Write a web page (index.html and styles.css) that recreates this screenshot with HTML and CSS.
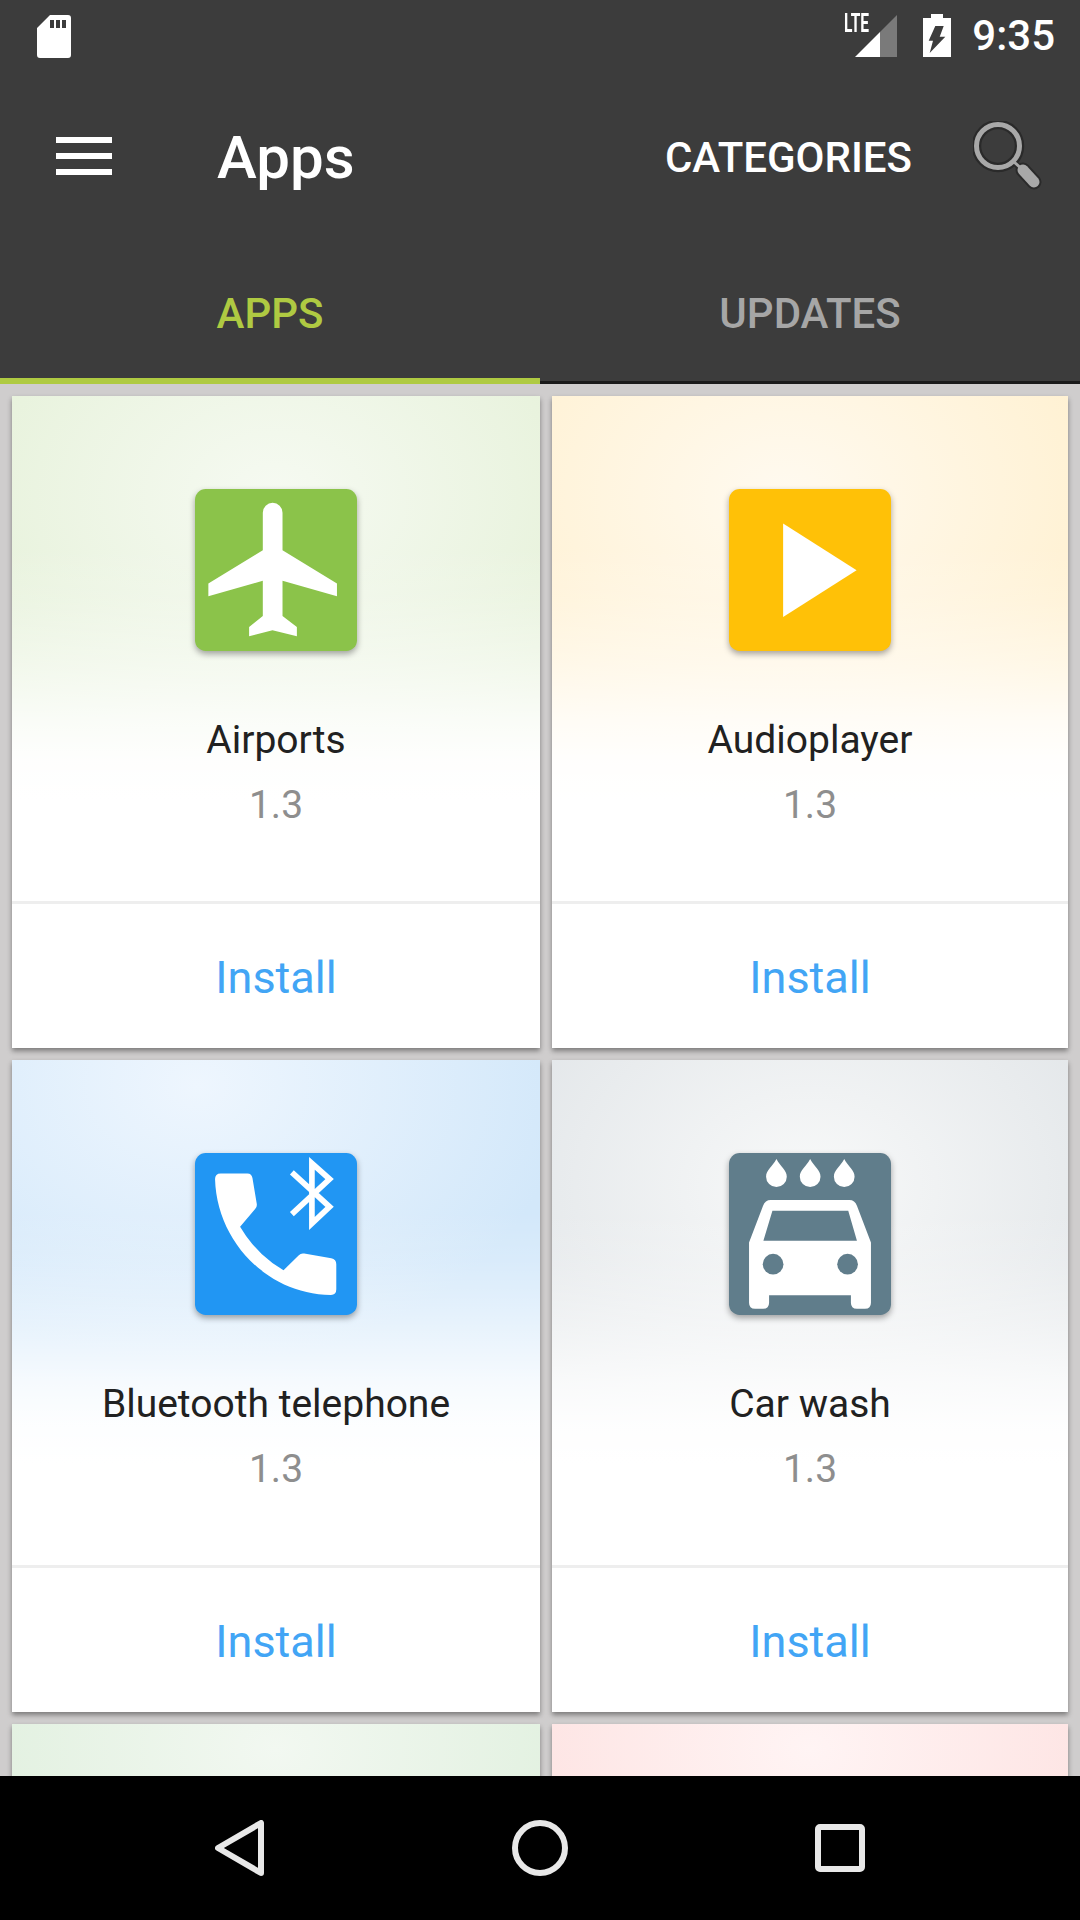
FILE: index.html
```html
<!DOCTYPE html>
<html>
<head>
    <meta charset="UTF-8">
    <title>Apps</title>
    <link rel="stylesheet" href="styles.css">
</head>
<body>
    <header class="app-header">
        <div class="status-bar">
            <svg class="sd-icon" viewBox="0 0 34 43">
                <path fill="#fff" fill-rule="evenodd" d="M13 0H31a3 3 0 0 1 3 3V40a3 3 0 0 1-3 3H3a3 3 0 0 1-3-3V13ZM13 5V13H17V5ZM19 5V13H23V5ZM25 5V13H29V5Z"/>
            </svg>
            <div class="status-right">
                <span class="lte">LTE</span>
                <svg class="signal-icon" viewBox="0 0 42 42">
                    <path fill="#7a7a7a" d="M42 0V42H25V17Z"/>
                    <path fill="#fff" d="M25 17V42H0Z"/>
                </svg>
                <svg class="battery-icon" viewBox="0 0 28 43">
                    <path fill="#fff" d="M8 0H20V4H28V43H0V4H8Z"/>
                    <path fill="#3c3c3c" d="M12.300 12H20.700L16.700 22.700H22.300L6.700 39 10 26.700H5.700Z"/>
                </svg>
                <span class="clock">9:35</span>
            </div>
        </div>
        <div class="toolbar">
            <div class="menu-icon"><span></span><span></span><span></span></div>
            <h1 class="page-title">Apps</h1>
            <span class="toolbar-action">CATEGORIES</span>
            <svg class="search-icon" viewBox="0 0 70 70">
                <circle cx="25" cy="25" r="21.500" fill="none" stroke="#2a2a2a" stroke-width="9.500"/>
                <path d="M41 41 61 61" stroke="#2a2a2a" stroke-width="6" fill="none"/>
                <path d="M50 49 61 61" stroke="#2a2a2a" stroke-width="15" stroke-linecap="round" fill="none"/>
                <circle cx="25" cy="25" r="21.500" fill="none" stroke="#a8a8a8" stroke-width="5"/>
                <path d="M41 41 50 49" stroke="#a8a8a8" stroke-width="3" fill="none"/>
                <path d="M50 49 61 61" stroke="#a8a8a8" stroke-width="11" stroke-linecap="round" fill="none"/>
            </svg>
        </div>
        <nav class="tabs">
            <div class="tab active">APPS</div>
            <div class="tab">UPDATES</div>
        </nav>
    </header>

    <main class="app-grid">
        <div class="card">
            <div class="card-top glow-green">
                <svg class="app-icon" viewBox="75 57 485 485">
                    <rect x="75" y="57" width="485" height="485" rx="32" fill="#8bc34a"/>
                    <path fill="#fff" d="M278 128a29.500 29.500 0 0 1 59 0V240L500 340V378L337 332V437L380 470V498L307 480 237 498V470L278 437V332L115 378V340L278 240Z"/>
                </svg>
                <div class="app-name">Airports</div>
                <div class="app-version">1.3</div>
            </div>
            <div class="card-action">Install</div>
        </div>
        <div class="card">
            <div class="card-top glow-amber">
                <svg class="app-icon" viewBox="75 57 485 485">
                    <rect x="75" y="57" width="485" height="485" rx="32" fill="#ffc107"/>
                    <path fill="#fff" d="M237 160 457 300 237 440Z"/>
                </svg>
                <div class="app-name">Audioplayer</div>
                <div class="app-version">1.3</div>
            </div>
            <div class="card-action">Install</div>
        </div>
        <div class="card">
            <div class="card-top glow-blue">
                <svg class="app-icon" viewBox="75 57 485 485">
                    <rect x="75" y="57" width="485" height="485" rx="32" fill="#2196f3"/>
                    <path fill="#fff" d="M152 118H232Q245 118 247 132L260 210Q261 219 255 225L210 278Q260 362 340 408L385 364Q392 356 402 358L483 372Q498 375 498 390V465Q498 482 482 482C290 480 140 320 135 135Q135 118 152 118Z"/>
                    <path fill="none" stroke="#fff" stroke-width="17" d="M365 115 478 218 425 268V88L478 135 365 240"/>
                </svg>
                <div class="app-name">Bluetooth telephone</div>
                <div class="app-version">1.3</div>
            </div>
            <div class="card-action">Install</div>
        </div>
        <div class="card">
            <div class="card-top glow-grey">
                <svg class="app-icon" viewBox="75 57 485 485">
                    <rect x="75" y="57" width="485" height="485" rx="32" fill="#607d8b"/>
                    <path fill="#fff" d="M217 75C205 98 186 108 186 128a31 31 0 0 0 62 0C248 108 229 98 217 75ZM318 75C306 98 287 108 287 128a31 31 0 0 0 62 0C349 108 330 98 318 75ZM420 75C408 98 389 108 389 128a31 31 0 0 0 62 0C451 108 432 98 420 75Z"/>
                    <path fill="#fff" fill-rule="evenodd" d="M200 198H435Q452 198 458 215L500 325V505Q500 523 482 523H458Q440 523 440 505V483H195V505Q195 523 177 523H153Q135 523 135 505V325L177 215Q183 198 200 198ZM205 230 178 320H458L432 230Z"/>
                    <circle cx="207" cy="390" r="31" fill="#607d8b"/>
                    <circle cx="430" cy="390" r="31" fill="#607d8b"/>
                </svg>
                <div class="app-name">Car wash</div>
                <div class="app-version">1.3</div>
            </div>
            <div class="card-action">Install</div>
        </div>
        <div class="card">
            <div class="card-top glow-mint"></div>
        </div>
        <div class="card">
            <div class="card-top glow-pink"></div>
        </div>
    </main>

    <footer class="nav-bar">
        <svg class="nav-back" viewBox="0 0 50 56">
            <path fill="none" stroke="#e8e8e8" stroke-width="6" stroke-linejoin="round" d="M46 3V53L3 28Z"/>
        </svg>
        <svg class="nav-home" viewBox="0 0 56 56">
            <circle cx="28" cy="28" r="25" fill="none" stroke="#e8e8e8" stroke-width="6"/>
        </svg>
        <svg class="nav-recent" viewBox="0 0 50 48">
            <rect x="3" y="3" width="44" height="42" rx="2" fill="none" stroke="#e8e8e8" stroke-width="6"/>
        </svg>
    </footer>
</body>
</html>
```
FILE: styles.css
```css
* {
    box-sizing: border-box;
}

body {
    margin: 0;
    width: 1080px;
    height: 1920px;
    overflow: hidden;
    display: flex;
    flex-direction: column;
    background-color: #cfcdcd;
    font-family: Roboto, "Noto Sans", sans-serif;
}

.app-header {
    flex: none;
    background-color: #3c3c3c;
    color: white;
}

.status-bar {
    height: 72px;
    display: flex;
    align-items: flex-start;
    justify-content: space-between;
    padding: 15px 25px 0 37px;
}

.sd-icon {
    width: 34px;
    height: 43px;
}

.status-right {
    display: flex;
    align-items: flex-start;
}

.lte {
    width: 27px;
    margin-right: -16px;
    font-size: 25px;
    line-height: 18px;
    font-weight: 700;
    transform: scaleX(0.62);
    transform-origin: left top;
}

.signal-icon {
    width: 42px;
    height: 42px;
}

.battery-icon {
    width: 28px;
    height: 43px;
    margin: -1px 21px 0 26px;
}

.clock {
    font-size: 42px;
    line-height: 42px;
    font-weight: 500;
}

.toolbar {
    height: 168px;
    display: flex;
    align-items: center;
    padding: 0 37px 0 56px;
}

.menu-icon {
    width: 56px;
    display: flex;
    flex-direction: column;
    gap: 10px;
    margin-right: 105px;
}

.menu-icon span {
    height: 6px;
    background-color: white;
}

.page-title {
    flex: 1;
    margin: 4px 0 0;
    font-size: 60px;
    font-weight: 500;
    line-height: 64px;
}

.toolbar-action {
    margin-top: 2px;
    font-size: 42px;
    font-weight: 500;
}

.search-icon {
    width: 70px;
    height: 70px;
    margin-left: 61px;
}

.tabs {
    height: 144px;
    display: flex;
}

.tab {
    flex: 1;
    display: flex;
    align-items: center;
    justify-content: center;
    font-size: 42px;
    font-weight: 500;
    color: #a6a6a6;
    padding-top: 3px;
    box-shadow: inset 0 -3px 0 #1a1a1a;
}

.tab.active {
    color: #afca42;
    box-shadow: inset 0 -6px 0 #afca42;
}

.app-grid {
    flex: 1;
    min-height: 0;
    overflow: hidden;
    display: grid;
    grid-template-columns: 528px 516px;
    grid-auto-rows: 652px;
    gap: 12px;
    padding: 12px;
}

.card {
    display: flex;
    flex-direction: column;
    background-color: white;
    box-shadow: 0 3px 5px rgba(0, 0, 0, 0.4);
}

.card-top {
    height: 505px;
    flex: none;
    display: flex;
    flex-direction: column;
    align-items: center;
    padding-top: 93px;
}

/* fade to white is the same on every card, only the tint changes */
.glow-green,
.glow-amber,
.glow-blue,
.glow-grey {
    --fade: linear-gradient(to bottom, rgba(255, 255, 255, 0) 30%, rgba(255, 255, 255, 0.15) 40%, rgba(255, 255, 255, 0.45) 52%, rgba(255, 255, 255, 0.8) 64%, rgba(255, 255, 255, 0.95) 72%, #fff 80%);
}

.glow-green {
    background: var(--fade), radial-gradient(ellipse 70% 55% at 50% 20%, #f6faf2, #e5f1d8);
}

.glow-amber {
    background: var(--fade), radial-gradient(ellipse 70% 55% at 45% 20%, #fffaf0, #fff0cf);
}

.glow-blue {
    background: var(--fade), radial-gradient(ellipse 70% 55% at 35% 5%, #eef6fe, #d3e8fa);
}

.glow-grey {
    background: var(--fade), radial-gradient(ellipse 70% 55% at 50% 25%, #f8f9f9, #e1e5e8);
}

.glow-mint {
    background: radial-gradient(ellipse 70% 55% at 50% 5%, #f2f8f1, #deefdc);
}

.glow-pink {
    background: radial-gradient(ellipse 70% 55% at 50% 5%, #fff4f4, #fde0df);
}

.app-icon {
    width: 162px;
    height: 162px;
    flex: none;
    filter: drop-shadow(0 3px 3px rgba(0, 0, 0, 0.35));
}

.app-name {
    margin-top: 65px;
    font-size: 39px;
    line-height: 48px;
    color: #212121;
}

.app-version {
    margin-top: 17px;
    font-size: 39px;
    line-height: 48px;
    color: #8e8e8e;
}

.card-action {
    flex: 1;
    display: flex;
    align-items: center;
    justify-content: center;
    padding-top: 2px;
    border-top: 3px solid #eeeeee;
    font-size: 45px;
    color: #42a5f5;
}

.nav-bar {
    position: absolute;
    left: 0;
    right: 0;
    top: 1776px;
    height: 144px;
    display: flex;
    align-items: center;
    background-color: black;
}

.nav-back {
    width: 50px;
    height: 56px;
    margin-left: 215px;
}

.nav-home {
    width: 56px;
    height: 56px;
    margin-left: 247px;
}

.nav-recent {
    width: 50px;
    height: 48px;
    margin-left: 247px;
}
```
